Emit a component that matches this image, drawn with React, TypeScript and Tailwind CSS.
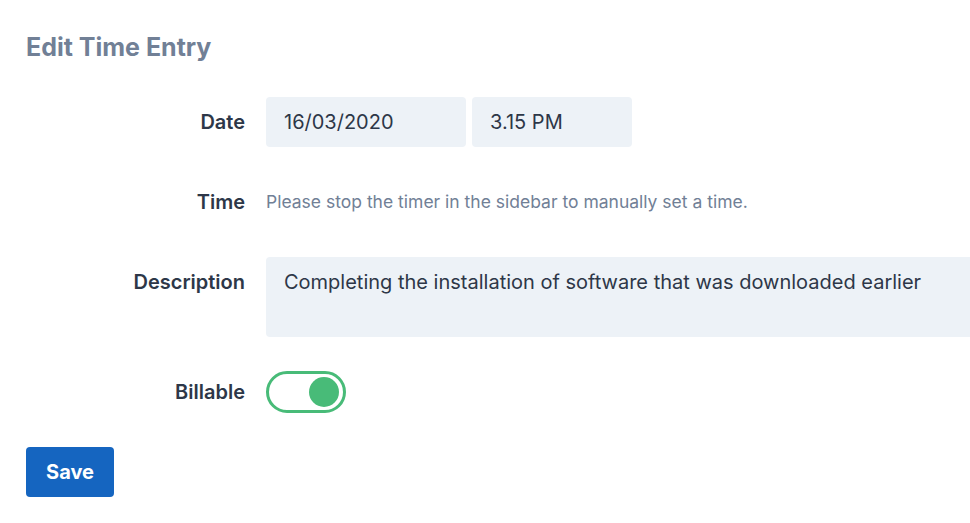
import React from "react";

export default function App() {
  return (
    <div className="w-[970px] h-[523px] overflow-hidden bg-white" style={{ fontFamily: "Inter, 'Noto Sans', sans-serif" }}>
      <div className="pl-[26px] pt-[32px]">
        <h1 className="text-[25px] leading-[30px] font-bold text-[#718096]">Edit Time Entry</h1>
        <div className="mt-[35px] flex flex-col">
          <div className="flex items-center h-[50px]">
            <div className="w-[219px] shrink-0 text-right text-[20px] font-semibold text-[#2d3748]">Date</div>
            <div className="ml-[21px] flex gap-[6px]">
              <div className="w-[200px] h-[50px] rounded-[4px] bg-[#edf2f7] flex items-center px-[18px] text-[20px] text-[#2d3748]">16/03/2020</div>
              <div className="w-[160px] h-[50px] rounded-[4px] bg-[#edf2f7] flex items-center px-[18px] text-[20px] text-[#2d3748]">3.15 PM</div>
            </div>
          </div>
          <div className="flex items-center h-[50px] mt-[30px]">
            <div className="w-[219px] shrink-0 text-right text-[20px] font-semibold text-[#2d3748]">Time</div>
            <div className="ml-[21px] text-[17.5px] text-[#718096]">Please stop the timer in the sidebar to manually set a time.</div>
          </div>
          <div className="flex items-start mt-[30px]">
            <div className="w-[219px] shrink-0 text-right text-[20px] font-semibold text-[#2d3748] pt-[12px] leading-[26px]">Description</div>
            <div className="ml-[21px] w-[720px] h-[80px] rounded-[4px] bg-[#edf2f7] px-[18px] pt-[12px] text-[20px] leading-[26px] text-[#2d3748] shrink-0">Completing the installation of software that was downloaded earlier</div>
          </div>
          <div className="flex items-center h-[42px] mt-[34px]">
            <div className="w-[219px] shrink-0 text-right text-[20px] font-semibold text-[#2d3748]">Billable</div>
            <div className="ml-[21px] w-[80px] h-[42px] rounded-full border-[3px] border-[#48bb78] flex items-center justify-end pr-[4px]">
              <div className="w-[30px] h-[30px] rounded-full bg-[#48bb78]" />
            </div>
          </div>
        </div>
        <button className="mt-[34px] w-[88px] h-[50px] rounded-[4px] bg-[#1565c0] text-white text-[20px] font-bold">Save</button>
      </div>
    </div>
  );
}
